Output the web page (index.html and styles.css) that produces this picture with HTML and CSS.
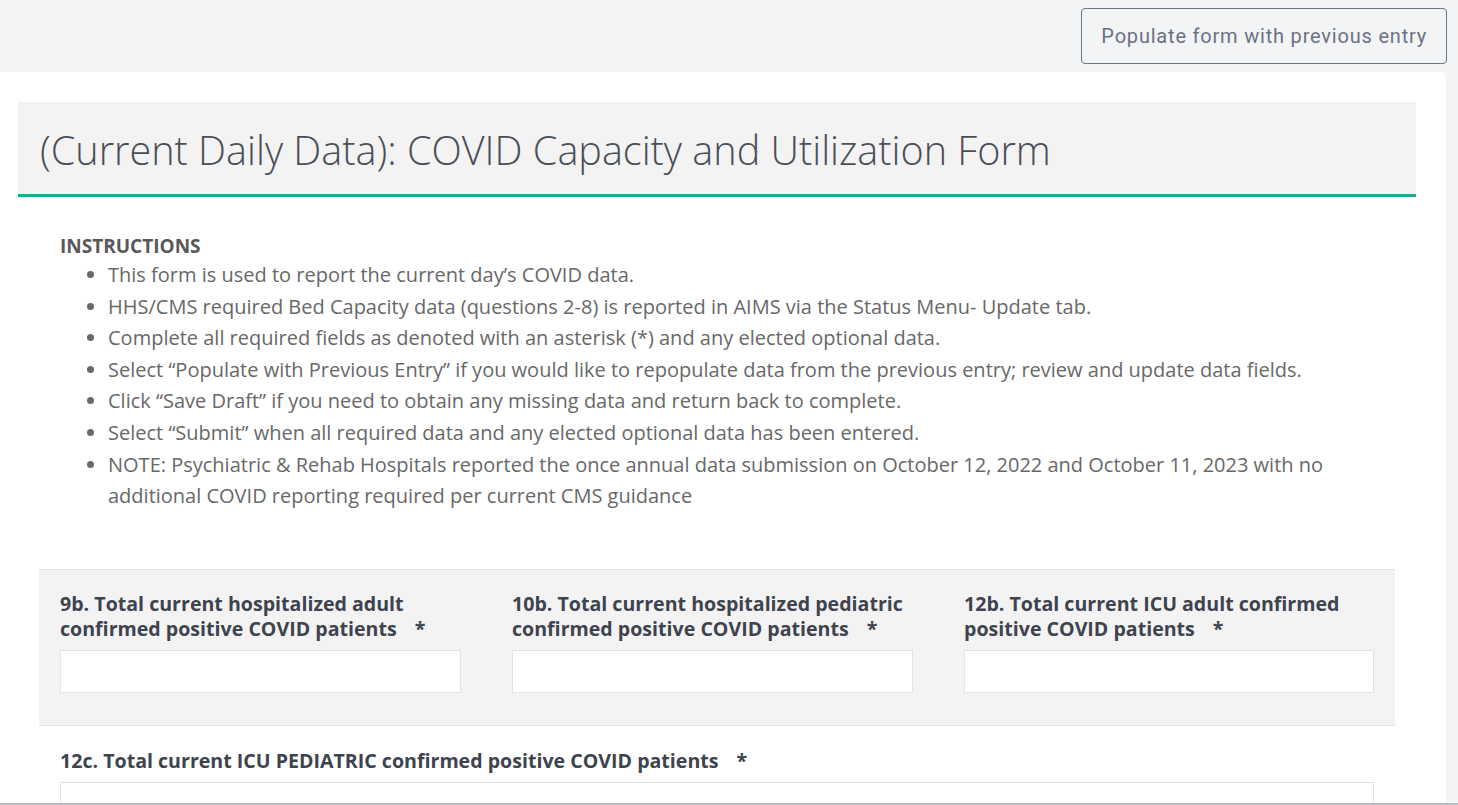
FILE: index.html
```html
<!DOCTYPE html>
<html lang="en">
<head>
<meta charset="utf-8">
<title>COVID Capacity and Utilization Form</title>
<link rel="stylesheet" href="styles.css">
</head>
<body>
<div class="topbar">
  <button class="populate-btn" type="button">Populate form with previous entry</button>
</div>
<main class="card">
  <div class="form-header">
    <h1 class="form-title">(Current Daily Data): COVID Capacity and Utilization Form</h1>
  </div>
  <section class="instructions">
    <h2 class="instructions-title">INSTRUCTIONS</h2>
    <ul class="instructions-list">
      <li>This form is used to report the current day’s COVID data.</li>
      <li>HHS/CMS required Bed Capacity data (questions 2-8) is reported in AIMS via the Status Menu- Update tab.</li>
      <li>Complete all required fields as denoted with an asterisk (*) and any elected optional data.</li>
      <li>Select “Populate with Previous Entry” if you would like to repopulate data from the previous entry; review and update data fields.</li>
      <li>Click “Save Draft” if you need to obtain any missing data and return back to complete.</li>
      <li>Select “Submit” when all required data and any elected optional data has been entered.</li>
      <li>NOTE: Psychiatric &amp; Rehab Hospitals reported the once annual data submission on October 12, 2022 and October 11, 2023 with no additional COVID reporting required per current CMS guidance</li>
    </ul>
  </section>
  <section class="field-group shaded">
    <div class="field">
      <label class="field-label">9b. Total current hospitalized adult confirmed positive COVID patients<span class="req">*</span></label>
      <input class="field-input" type="text">
    </div>
    <div class="field">
      <label class="field-label">10b. Total current hospitalized pediatric confirmed positive COVID patients<span class="req">*</span></label>
      <input class="field-input" type="text">
    </div>
    <div class="field">
      <label class="field-label">12b. Total current ICU adult confirmed positive COVID patients<span class="req">*</span></label>
      <input class="field-input" type="text">
    </div>
  </section>
  <section class="field-group single">
    <div class="field">
      <label class="field-label">12c. Total current ICU PEDIATRIC confirmed positive COVID patients<span class="req">*</span></label>
      <input class="field-input" type="text">
    </div>
  </section>
</main>
<div class="bottom-edge"></div>
</body>
</html>
```
FILE: styles.css
```css
* { box-sizing: border-box; }
html, body { margin: 0; padding: 0; }
body {
  background: #f3f4f6;
  font-family: "Open Sans", "Noto Sans", sans-serif;
  height: 805px;
  overflow: hidden;
}
.topbar {
  display: flex;
  justify-content: flex-end;
  padding: 8px 11px 8px 0;
}
.populate-btn {
  height: 56px;
  padding: 0 19px;
  background: #f3f4f6;
  border: 1px solid #6e7591;
  border-radius: 4px;
  font-family: Roboto, "Liberation Sans", sans-serif;
  font-size: 20px;
  color: #6b7183;
  letter-spacing: 0.8px;
}
.card {
  background: #ffffff;
  margin-right: 12px;
  border-radius: 0 5px 0 0;
  padding: 30px 30px 40px 18px;
  min-height: 800px;
}
.form-header {
  background: #f3f3f3;
  border-bottom: 3px solid #1aae8e;
  height: 95px;
  display: flex;
  align-items: center;
  padding-left: 22px;
  padding-top: 3px;
}
.form-title {
  margin: 0;
  font-weight: 300;
  font-size: 39.6px;
  color: #4a4f57;
  letter-spacing: 0;
}
.instructions {
  padding: 36px 0 0 42px;
}
.instructions-title {
  margin: 0;
  font-size: 19px;
  font-weight: 700;
  color: #595959;
  line-height: 26px;
}
.instructions-list {
  margin: 0;
  padding-left: 48px;
  padding-right: 60px;
  font-size: 20px;
  color: #686868;
  line-height: 31.6px;
}
.field-group {
  margin: 0 21px;
  padding: 21px 21px;
}
.shaded {
  margin-top: 57px;
  background: #f3f3f3;
  border-top: 1px solid #e3e3e3;
  border-bottom: 1px solid #e3e3e3;
  display: grid;
  grid-template-columns: 401px 401px 410px;
  column-gap: 51px;
  padding-top: 21px;
  padding-bottom: 32px;
}
.single {
  padding-top: 22px;
}
.field {
  display: flex;
  flex-direction: column;
}
.field-label {
  font-size: 19.6px;
  font-weight: 700;
  color: #3e444e;
  line-height: 25px;
  margin-bottom: 9px;
}
.req {
  display: inline-block;
  margin-left: 18px;
}
.field-input {
  height: 43px;
  background: #ffffff;
  border: 1px solid #e3e3e3;
  border-radius: 0;
  width: 100%;
  font-size: 18px;
}
.single .field-input { width: 1314px; }
.bottom-edge {
  position: fixed;
  left: 0;
  right: 0;
  bottom: 0;
  height: 2px;
  background: #b6bdca;
}
```
